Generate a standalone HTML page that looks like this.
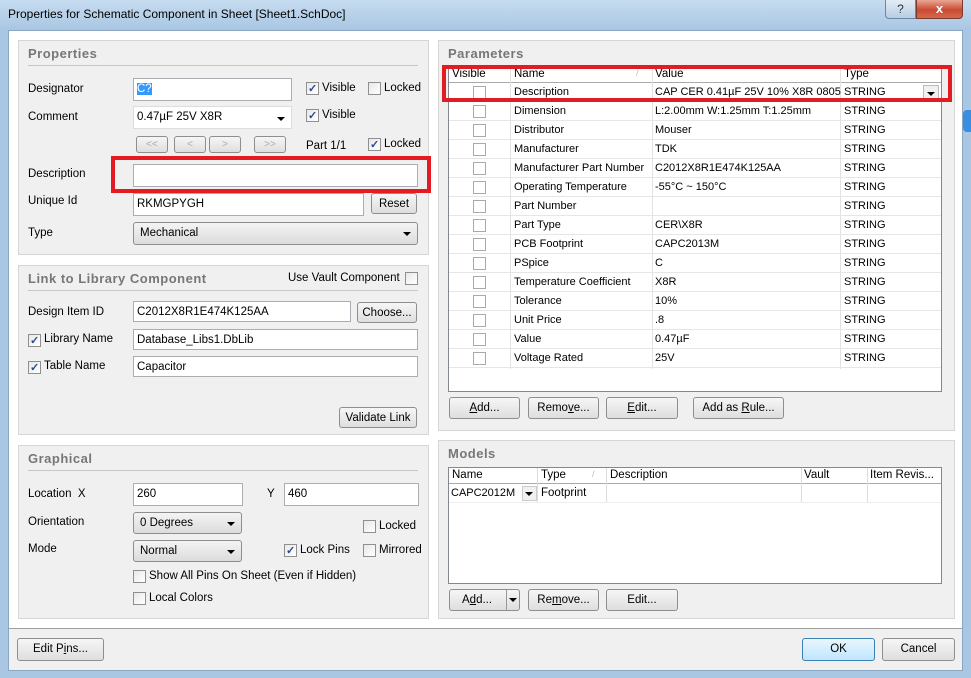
<!DOCTYPE html>
<html><head><meta charset="utf-8">
<style>
*{box-sizing:border-box;margin:0;padding:0}
body{width:971px;height:678px;overflow:hidden;font-family:"Liberation Sans",sans-serif;font-size:11.5px;color:#000;background:#a9c6e2;position:relative}
.a{position:absolute}
.title{left:0;top:0;width:971px;height:30px;background:linear-gradient(#c6dcf0,#b5cfe8 60%,#a9c6e2)}
.frame{left:8px;top:30px;width:955px;height:641px;background:#fff;border:1px solid #8aa6c2}
.bot{left:9px;top:628px;width:953px;height:42px;background:#f0f0f0;border-top:1px solid #a0a0a0}
.grp{background:#f0f0f0;border:1px solid #d6d6d6}
.gt{font-weight:bold;font-size:13px;color:#777;letter-spacing:.5px}
.hr{height:1px;background:#c8c8c8}
.in{background:#fff;border:1px solid #abadb3;padding:3px 3px;font-size:11.5px;line-height:14px;white-space:nowrap;overflow:hidden}
.btn{background:linear-gradient(#f6f6f6,#dedede);border:1px solid #8e8e8e;border-radius:3px;text-align:center;font-size:11.5px;line-height:20px}
.dd{background:linear-gradient(#f4f4f4,#dcdcdc);border:1px solid #8e8e8e;border-radius:3px;padding:3px 6px;line-height:15px}
.arr{position:absolute;right:6px;top:8px;width:0;height:0;border-left:4px solid transparent;border-right:4px solid transparent;border-top:4px solid #000}
.cb{width:13px;height:13px;border:1px solid #8f8f8f;background:linear-gradient(135deg,#e8e8e8,#fff)}
.cb.c::after{content:"✓";position:absolute;font-size:11px;font-weight:bold;color:#2a4a8c;left:1px;top:-1px}
.cb{position:absolute}
.red{border:4px solid #e31b23}
.t{white-space:nowrap}
.tb{background:#fff;border:1px solid #828790}
u{text-decoration:underline}
</style></head><body>
<div class="a title"></div>
<div class="a t" style="left:8px;top:7px;font-size:12px">Properties for Schematic Component in Sheet [Sheet1.SchDoc]</div>
<div class="a" style="left:885px;top:0;width:31px;height:19px;background:linear-gradient(#e3ecf6,#b8cde3);border:1px solid #6c86a6;border-top:none;border-radius:0 0 0 4px;text-align:center;line-height:18px;font-size:12px;color:#333">?</div>
<div class="a" style="left:916px;top:0;width:47px;height:19px;background:linear-gradient(#e9a896,#c94a32 55%,#d5694d);border:1px solid #7a3a2c;border-top:none;border-radius:0 0 4px 0;text-align:center;line-height:17px;font-size:13px;font-weight:bold;color:#fff">x</div>
<div class="a frame"></div>
<div class="a" style="left:963px;top:110px;width:8px;height:22px;background:#3a8ee0;border-radius:4px 0 0 4px"></div>

<!-- Properties -->
<div class="a grp" style="left:18px;top:40px;width:411px;height:215px"></div>
<div class="a gt" style="left:28px;top:46px">Properties</div>
<div class="a hr" style="left:28px;top:65px;width:390px"></div>
<div class="a t" style="left:28px;top:83px">Designator</div>
<div class="a in" style="left:133px;top:78px;width:159px;height:23px"><span style="background:#3399ff;color:#fff">C?</span></div>
<div class="a cb c" style="left:306px;top:82px"></div><div class="a t" style="left:322px;top:82px">Visible</div>
<div class="a cb" style="left:368px;top:82px"></div><div class="a t" style="left:384px;top:82px">Locked</div>
<div class="a t" style="left:28px;top:111px">Comment</div>
<div class="a in" style="left:133px;top:106px;width:159px;height:23px;border-color:#ddd">0.47µF 25V X8R<span class="arr" style="top:10px;right:6px"></span></div>
<div class="a cb c" style="left:306px;top:109px"></div><div class="a t" style="left:322px;top:109px">Visible</div>
<div class="a btn" style="left:136px;top:136px;width:32px;height:17px;line-height:15px;color:#aaa;font-size:10px">&lt;&lt;</div>
<div class="a btn" style="left:174px;top:136px;width:32px;height:17px;line-height:15px;color:#aaa;font-size:10px">&lt;</div>
<div class="a btn" style="left:209px;top:136px;width:32px;height:17px;line-height:15px;color:#aaa;font-size:10px">&gt;</div>
<div class="a btn" style="left:254px;top:136px;width:32px;height:17px;line-height:15px;color:#aaa;font-size:10px">&gt;&gt;</div>
<div class="a t" style="left:306px;top:140px">Part 1/1</div>
<div class="a cb c" style="left:368px;top:138px"></div><div class="a t" style="left:384px;top:138px">Locked</div>
<div class="a red" style="left:111px;top:156px;width:320px;height:37px"></div>
<div class="a t" style="left:28px;top:168px">Description</div>
<div class="a in" style="left:133px;top:164px;width:285px;height:23px"></div>
<div class="a t" style="left:28px;top:195px">Unique Id</div>
<div class="a in" style="left:133px;top:193px;width:231px;height:23px">RKMGPYGH</div>
<div class="a btn" style="left:371px;top:193px;width:46px;height:21px">Reset</div>
<div class="a t" style="left:28px;top:227px">Type</div>
<div class="a dd" style="left:133px;top:222px;width:285px;height:23px">Mechanical<span class="arr" style="top:9px"></span></div>

<!-- Link -->
<div class="a grp" style="left:18px;top:265px;width:411px;height:170px"></div>
<div class="a gt" style="left:28px;top:271px">Link to Library Component</div>
<div class="a t" style="left:288px;top:272px">Use Vault Component</div>
<div class="a cb" style="left:405px;top:272px"></div>
<div class="a hr" style="left:28px;top:290px;width:390px"></div>
<div class="a t" style="left:28px;top:306px">Design Item ID</div>
<div class="a in" style="left:133px;top:301px;width:218px;height:21px">C2012X8R1E474K125AA</div>
<div class="a btn" style="left:357px;top:302px;width:60px;height:21px">Choose...</div>
<div class="a cb c" style="left:28px;top:334px"></div><div class="a t" style="left:44px;top:333px">Library Name</div>
<div class="a in" style="left:133px;top:329px;width:285px;height:21px">Database_Libs1.DbLib</div>
<div class="a cb c" style="left:28px;top:361px"></div><div class="a t" style="left:44px;top:360px">Table Name</div>
<div class="a in" style="left:133px;top:356px;width:285px;height:21px">Capacitor</div>
<div class="a btn" style="left:339px;top:407px;width:78px;height:21px">Validate Link</div>

<!-- Graphical -->
<div class="a grp" style="left:18px;top:445px;width:411px;height:174px"></div>
<div class="a gt" style="left:28px;top:451px">Graphical</div>
<div class="a hr" style="left:28px;top:470px;width:390px"></div>
<div class="a t" style="left:28px;top:488px">Location &nbsp;X</div>
<div class="a in" style="left:133px;top:483px;width:110px;height:23px">260</div>
<div class="a t" style="left:267px;top:488px">Y</div>
<div class="a in" style="left:284px;top:483px;width:135px;height:23px">460</div>
<div class="a t" style="left:28px;top:516px">Orientation</div>
<div class="a dd" style="left:133px;top:512px;width:109px;height:22px">0 Degrees<span class="arr" style="top:9px"></span></div>
<div class="a cb" style="left:363px;top:520px"></div><div class="a t" style="left:379px;top:520px">Locked</div>
<div class="a t" style="left:28px;top:543px">Mode</div>
<div class="a dd" style="left:133px;top:540px;width:109px;height:22px">Normal<span class="arr" style="top:9px"></span></div>
<div class="a cb c" style="left:284px;top:544px"></div><div class="a t" style="left:300px;top:544px">Lock Pins</div>
<div class="a cb" style="left:363px;top:544px"></div><div class="a t" style="left:379px;top:544px">Mirrored</div>
<div class="a cb" style="left:133px;top:570px"></div><div class="a t" style="left:149px;top:570px">Show All Pins On Sheet (Even if Hidden)</div>
<div class="a cb" style="left:133px;top:592px"></div><div class="a t" style="left:149px;top:592px">Local Colors</div>

<!-- Parameters -->
<div class="a grp" style="left:438px;top:40px;width:517px;height:391px"></div>
<div class="a gt" style="left:448px;top:46px">Parameters</div>
<div class="a tb" style="left:448px;top:67px;width:494px;height:325px"></div>
<div class="a" style="left:449px;top:67px;width:492px;height:16px;background:#fff;border-bottom:1px solid #aaa"></div>
<div class="a t" style="left:452px;top:68px">Visible</div>
<div class="a t" style="left:514px;top:68px">Name</div><div class="a" style="left:636px;top:68px;color:#bbb;font-size:9px">/</div>
<div class="a t" style="left:655px;top:68px">Value</div>
<div class="a t" style="left:844px;top:68px">Type</div>
<div class="a" style="left:510px;top:67px;width:1px;height:302px;background:#e2e2e2"></div>
<div class="a" style="left:652px;top:67px;width:1px;height:302px;background:#e2e2e2"></div>
<div class="a" style="left:840px;top:67px;width:1px;height:302px;background:#e2e2e2"></div>
<div id="rows"></div>
<div class="a red" style="left:442px;top:65px;width:510px;height:37px"></div>
<div class="a btn" style="left:449px;top:397px;width:71px;height:22px"><u>A</u>dd...</div>
<div class="a btn" style="left:528px;top:397px;width:71px;height:22px">Remo<u>v</u>e...</div>
<div class="a btn" style="left:606px;top:397px;width:72px;height:22px"><u>E</u>dit...</div>
<div class="a btn" style="left:693px;top:397px;width:91px;height:22px">Add as <u>R</u>ule...</div>

<!-- Models -->
<div class="a grp" style="left:438px;top:440px;width:517px;height:179px"></div>
<div class="a gt" style="left:448px;top:446px">Models</div>
<div class="a tb" style="left:448px;top:467px;width:494px;height:117px"></div>
<div class="a" style="left:449px;top:468px;width:492px;height:16px;border-bottom:1px solid #aaa"></div>
<div class="a t" style="left:452px;top:469px">Name</div>
<div class="a t" style="left:541px;top:469px">Type</div><div class="a" style="left:592px;top:469px;color:#bbb;font-size:9px">/</div>
<div class="a t" style="left:610px;top:469px">Description</div>
<div class="a t" style="left:804px;top:469px">Vault</div>
<div class="a t" style="left:870px;top:469px">Item Revis...</div>
<div class="a" style="left:537px;top:468px;width:1px;height:34px;background:#ddd"></div>
<div class="a" style="left:606px;top:468px;width:1px;height:34px;background:#ddd"></div>
<div class="a" style="left:801px;top:468px;width:1px;height:34px;background:#ddd"></div>
<div class="a" style="left:867px;top:468px;width:1px;height:34px;background:#ddd"></div>
<div class="a" style="left:449px;top:502px;width:492px;height:1px;background:#eee"></div>
<div class="a t" style="left:451px;top:487px;font-size:11px">CAPC2012M</div>
<div class="a" style="left:522px;top:486px;width:15px;height:15px;border:1px solid #ccc;background:#f0f0f0"><span class="arr" style="right:3px;top:5px"></span></div>
<div class="a t" style="left:541px;top:487px">Footprint</div>
<div class="a btn" style="left:449px;top:589px;width:71px;height:22px;text-align:left;padding-left:12px">A<u>d</u>d...</div>
<div class="a" style="left:506px;top:590px;width:1px;height:20px;background:#999"></div>
<div class="a arr" style="left:509px;top:598px;right:auto"></div>
<div class="a btn" style="left:528px;top:589px;width:71px;height:22px">Re<u>m</u>ove...</div>
<div class="a btn" style="left:606px;top:589px;width:72px;height:22px">Edit...</div>

<!-- Bottom -->
<div class="a bot"></div>
<div class="a btn" style="left:17px;top:638px;width:87px;height:23px;line-height:21px">Edit P<u>i</u>ns...</div>
<div class="a btn" style="left:802px;top:638px;width:73px;height:23px;line-height:21px;border-color:#3c7fb1;background:linear-gradient(#eaf6fd,#bee6fd)">OK</div>
<div class="a btn" style="left:882px;top:638px;width:73px;height:23px;line-height:21px">Cancel</div>

<script>
var r=[["Description","CAP CER 0.41µF 25V 10% X8R 0805"],["Dimension","L:2.00mm  W:1.25mm T:1.25mm"],["Distributor","Mouser"],["Manufacturer","TDK"],["Manufacturer Part Number","C2012X8R1E474K125AA"],["Operating Temperature","-55°C ~ 150°C"],["Part Number",""],["Part Type","CER\\X8R"],["PCB Footprint","CAPC2013M"],["PSpice","C"],["Temperature Coefficient","X8R"],["Tolerance","10%"],["Unit Price",".8"],["Value","0.47µF"],["Voltage Rated","25V"]];
var h="";
r.forEach(function(x,i){var y=83+i*19;
h+='<div class="a" style="left:449px;top:'+(y+18)+'px;width:492px;height:1px;background:#e6e6e6"></div>';
h+='<div class="a cb" style="left:473px;top:'+(y+3)+'px;background:#fff;border-color:#aaa"></div>';
h+='<div class="a t" style="left:514px;top:'+(y+3)+'px;font-size:11px">'+x[0]+'</div>';
h+='<div class="a t" style="left:655px;top:'+(y+3)+'px;font-size:11px">'+x[1]+'</div>';
h+='<div class="a t" style="left:844px;top:'+(y+3)+'px;font-size:11px">STRING</div>';});
h+='<div class="a" style="left:923px;top:85px;width:16px;height:16px;border:1px solid #bbb;background:#f0f0f0"><span class="arr" style="right:3px;top:6px"></span></div>';
document.getElementById("rows").innerHTML=h;
</script>
</body></html>
